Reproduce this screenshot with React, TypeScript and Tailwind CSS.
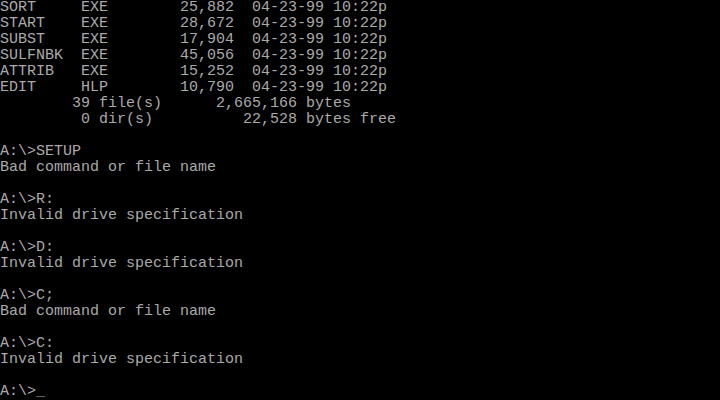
import React from "react";

const lines: string[] = [
  "SORT     EXE        25,882  04-23-99 10:22p",
  "START    EXE        28,672  04-23-99 10:22p",
  "SUBST    EXE        17,904  04-23-99 10:22p",
  "SULFNBK  EXE        45,056  04-23-99 10:22p",
  "ATTRIB   EXE        15,252  04-23-99 10:22p",
  "EDIT     HLP        10,790  04-23-99 10:22p",
  "        39 file(s)      2,665,166 bytes",
  "         0 dir(s)          22,528 bytes free",
  "",
  "A:\\>SETUP",
  "Bad command or file name",
  "",
  "A:\\>R:",
  "Invalid drive specification",
  "",
  "A:\\>D:",
  "Invalid drive specification",
  "",
  "A:\\>C;",
  "Bad command or file name",
  "",
  "A:\\>C:",
  "Invalid drive specification",
  "",
  "A:\\>_",
];

export default function App() {
  return (
    <div className="w-[720px] h-[400px] bg-black overflow-hidden text-[#aaaaaa] text-[15px] leading-[16px] whitespace-pre [font-family:'Liberation_Mono',monospace]">
      {lines.map((l, i) => (
        <div key={i} className="h-[16px]">
          {l || " "}
        </div>
      ))}
    </div>
  );
}
